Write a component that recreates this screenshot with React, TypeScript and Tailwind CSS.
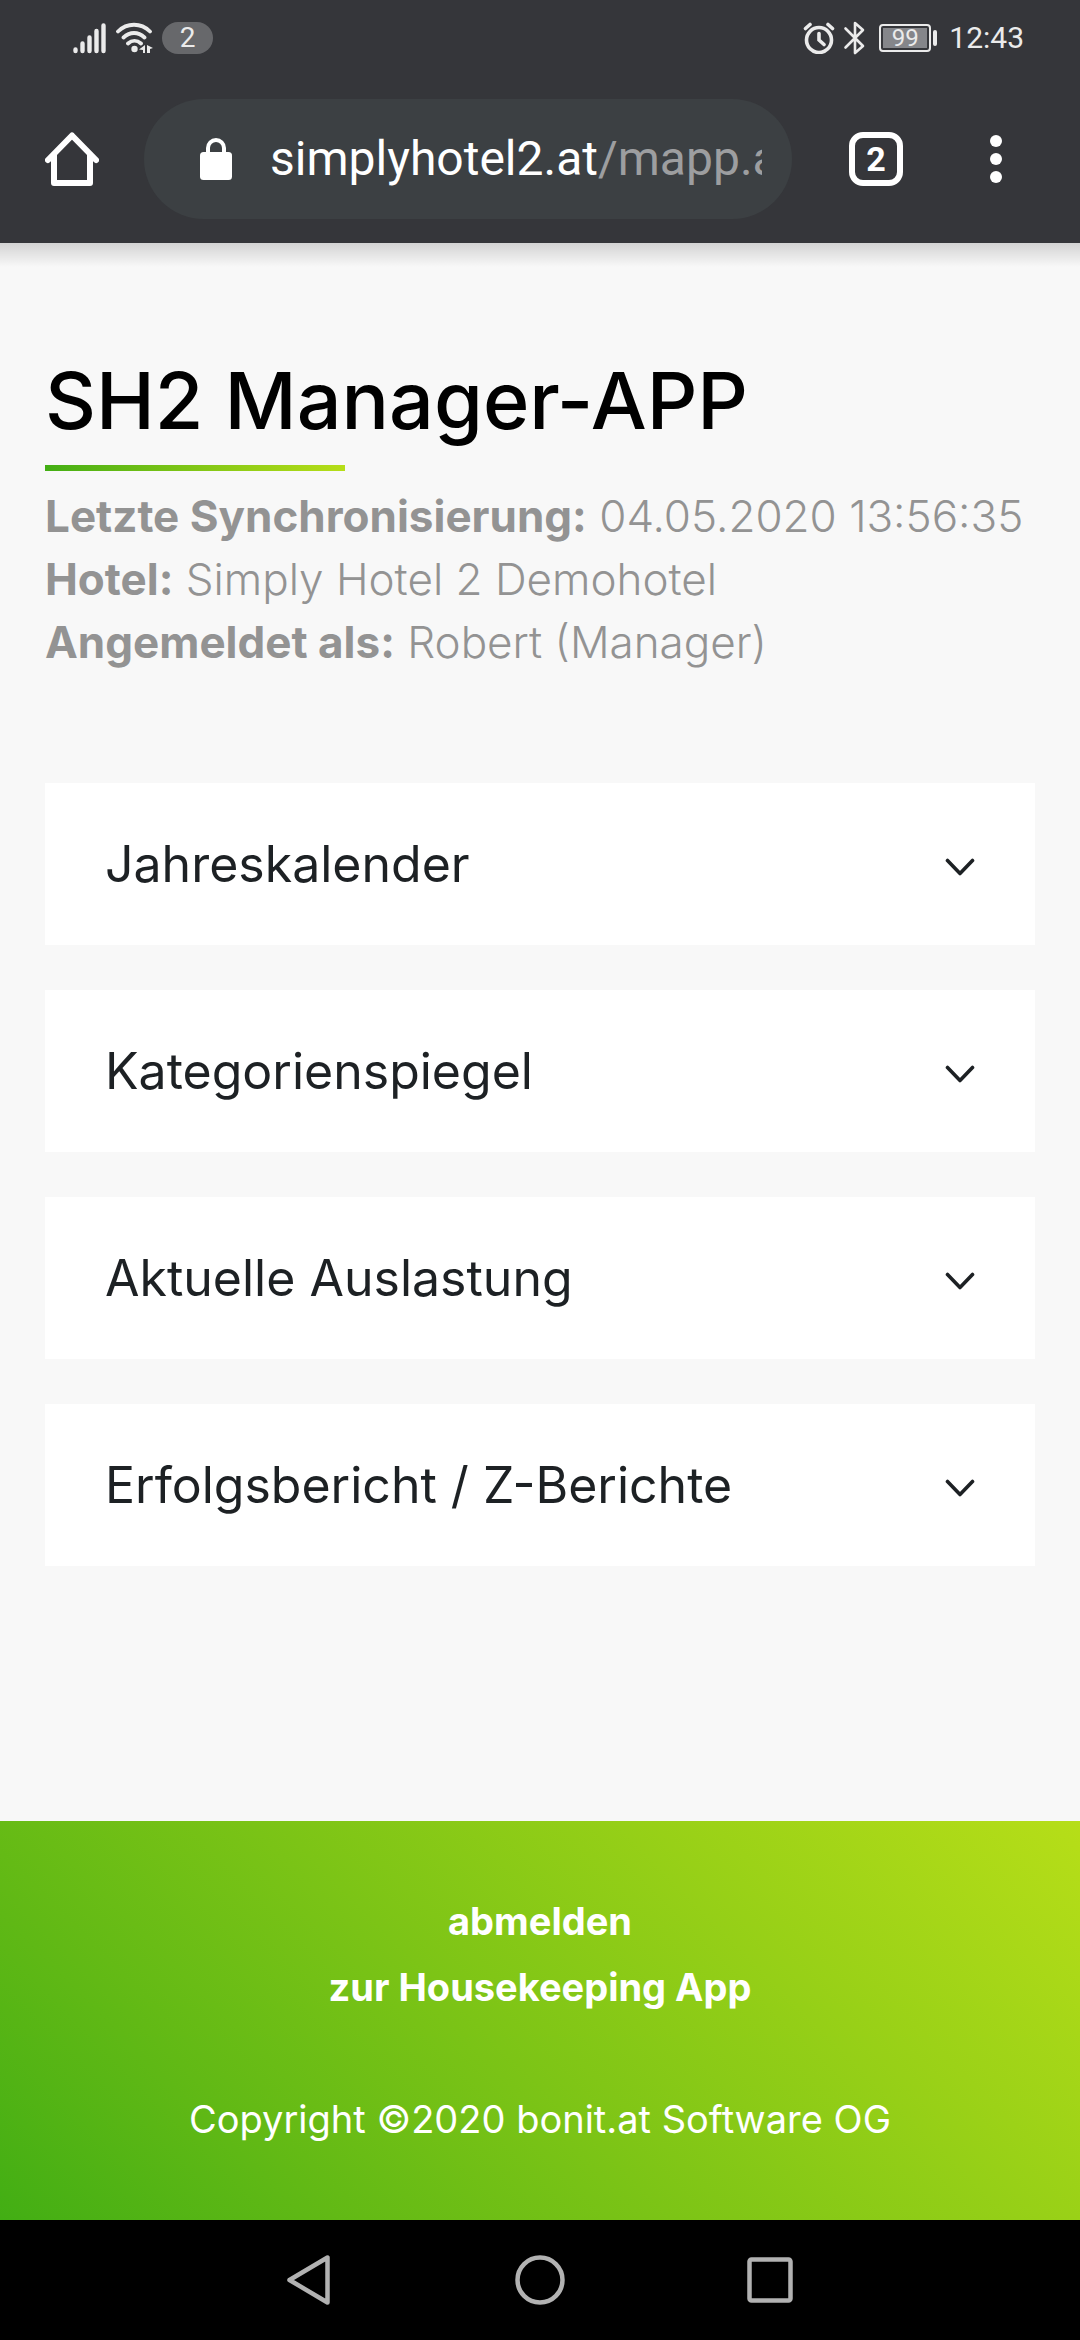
import { useState } from 'react';

const SECTIONS = [
  'Jahreskalender',
  'Kategorienspiegel',
  'Aktuelle Auslastung',
  'Erfolgsbericht / Z-Berichte',
];

const INFO: [string, string][] = [
  ['Letzte Synchronisierung:', '04.05.2020 13:56:35'],
  ['Hotel:', 'Simply Hotel 2 Demohotel'],
  ['Angemeldet als:', 'Robert (Manager)'],
];

function StatusBar() {
  return (
    <div className="flex h-[76px] items-center justify-between pr-14 pl-[72px] text-[#ebebeb]">
      <div className="flex items-center gap-2">
        <svg width="36" height="32" viewBox="0 0 36 32" fill="none" stroke="currentColor" strokeWidth="4.4" strokeLinecap="round">
          <path d="M3.5 27.5v1.5M10.5 21.5V29M17.5 15.5V29M24.5 9V29M31.5 3.5V29" />
        </svg>
        <svg width="38" height="32" viewBox="0 0 38 32" fill="none" stroke="currentColor" strokeWidth="3.8" strokeLinecap="round">
          <path d="M2 9.5C11 .5 25 .5 34 9.5M7.5 15.5c6.5-6 14.500-6 21 0M12 21.5c4-3.6 9-3.6 13 0" />
          <circle cx="18.5" cy="27" r="3.2" fill="currentColor" stroke="none" />
          <path d="M29 23v8h-2v-3l-4-.5zM31 31v-8l6 3-3 1v4z" fill="currentColor" stroke="none" />
        </svg>
        <span className="flex h-8 w-[51px] items-center justify-center rounded-full bg-[#67686b] text-[28px] leading-8">
          2
        </span>
      </div>
      <div className="flex items-center">
        <svg width="32" height="32" viewBox="0 0 32 32" fill="none" stroke="currentColor" strokeWidth="3.6" strokeLinecap="round">
          <circle cx="16" cy="18" r="12.5" />
          <path d="M2.5 6.5 7 2.5M29.5 6.5 25 2.5M16 11.500V18l5 4.500" />
        </svg>
        <svg className="ml-2" width="24" height="34" viewBox="0 0 24 34" fill="none" stroke="currentColor" strokeWidth="2.6" strokeLinejoin="round" strokeLinecap="round">
          <path d="M2.5 7.5 20 25l-8 7V2l8 7L2.5 26.5" />
        </svg>
        <span className="ml-3 flex h-7 w-[52px] items-center rounded border-2 border-current p-0.5">
          <span className="flex h-5 flex-1 items-center justify-center bg-[#85868a] text-[24px] leading-5">99</span>
        </span>
        <span className="ml-0.5 h-4 w-1 rounded-full bg-[#ebebeb]" />
        <span className="ml-3 text-[30px] leading-10">12:43</span>
      </div>
    </div>
  );
}

function BrowserBar() {
  return (
    <div className="flex items-center pt-[23px] pr-[66px] pb-6 pl-[45px]">
      <button type="button" aria-label="Startseite">
        <svg width="54" height="54" viewBox="0 0 54 54" fill="none" stroke="white" strokeWidth="6" strokeLinecap="round" strokeLinejoin="round">
          <path d="M3 28 27 3.5 51 28" />
          <path d="M9 23v28h36V23" />
        </svg>
      </button>
      <button
        type="button"
        className="ml-[45px] flex h-[120px] min-w-0 flex-1 items-center rounded-full bg-[#3c4043] pr-[30px] pl-14 text-left"
      >
        <svg className="shrink-0" width="32" height="44" viewBox="0 0 32 44">
          <rect y="15" width="32" height="28" rx="3.5" fill="white" />
          <path d="M8 17v-6a8 8 0 0 1 16 0v6" fill="none" stroke="white" strokeWidth="4" />
        </svg>
        <span className="ml-[38px] min-w-0 flex-1 overflow-hidden text-[48px] leading-[64px] whitespace-nowrap text-white">
          simplyhotel2.at<span className="text-[#9d9ea0]">/mapp.aspx</span>
        </span>
      </button>
      <button
        type="button"
        aria-label="Tabs"
        className="ml-[57px] flex size-[54px] items-center justify-center rounded-[14px] border-6 border-white text-[34px] leading-none font-bold text-white"
      >
        2
      </button>
      <button type="button" aria-label="Menü" className="ml-[75px]">
        <svg width="36" height="54" viewBox="0 0 36 54" fill="white">
          <circle cx="18" cy="9" r="6" />
          <circle cx="18" cy="27" r="6" />
          <circle cx="18" cy="45" r="6" />
        </svg>
      </button>
    </div>
  );
}

function Section({ title }: { title: string }) {
  const [open, setOpen] = useState(false);
  return (
    <button
      type="button"
      aria-expanded={open}
      onClick={() => setOpen(!open)}
      className="flex h-[162px] w-full items-center justify-between bg-white px-[60px] text-left text-[50px] text-[#1d2124]"
    >
      {title}
      <svg className={open ? 'rotate-180' : ''} width="32" height="32" viewBox="0 0 32 32" fill="none" stroke="currentColor" strokeWidth="3.6" strokeLinecap="round" strokeLinejoin="round">
        <path d="M4.5 12.5 17 25.5 29.5 12.5" />
      </svg>
    </button>
  );
}

export default function App() {
  return (
    <div className="flex min-h-screen flex-col bg-[#f8f8f8] font-['Inter',sans-serif]">
      <header className="relative bg-[#35363a] font-['Roboto',sans-serif]">
        <StatusBar />
        <BrowserBar />
        <div className="absolute inset-x-0 top-full h-6 bg-linear-to-b from-black/15 to-transparent" />
      </header>

      <main className="flex-1 px-[45px] pt-28">
        <h1 className="text-[79px] leading-[90px] font-medium text-black">SH2 Manager-APP</h1>
        <div className="mt-5 h-1.5 w-[300px] bg-linear-to-r from-[#42ae14] to-[#b6de18]" />
        <div className="mt-3.5 text-[44px] leading-[63px] font-light text-[#939393]">
          {INFO.map(([label, value]) => (
            <p key={label}>
              <strong className="font-bold">{label}</strong> {value}
            </p>
          ))}
        </div>
        <div className="mt-[109px] flex flex-col gap-[45px]">
          {SECTIONS.map((title) => (
            <Section key={title} title={title} />
          ))}
        </div>
      </main>

      <footer className="bg-linear-45 from-[#42ae14] to-[#b6de18] pt-[67px] pb-[68px] text-center text-[38px] leading-[66px] text-white">
        <p>
          <a href="#abmelden" className="font-bold">abmelden</a>
        </p>
        <p>
          <a href="#housekeeping" className="font-bold">zur Housekeeping App</a>
        </p>
        <p className="mt-[66px]">Copyright ©2020 bonit.at Software OG</p>
      </footer>

      <nav className="flex h-[120px] items-center justify-center gap-[180px] bg-black">
        <button type="button" aria-label="Zurück">
          <svg width="50" height="50" viewBox="0 0 50 50" fill="none" stroke="#b2b2b2" strokeWidth="4.5" strokeLinejoin="round">
            <path d="M4.5 25 42.5 2.5V47.5z" />
          </svg>
        </button>
        <button type="button" aria-label="Home">
          <svg width="50" height="50" viewBox="0 0 50 50" fill="none" stroke="#b2b2b2" strokeWidth="4.5">
            <circle cx="25" cy="25" r="22.5" />
          </svg>
        </button>
        <button type="button" aria-label="Übersicht">
          <svg width="50" height="50" viewBox="0 0 50 50" fill="none" stroke="#b2b2b2" strokeWidth="4.5">
            <rect x="4.5" y="4.5" width="41" height="41" rx="2" />
          </svg>
        </button>
      </nav>
    </div>
  );
}
